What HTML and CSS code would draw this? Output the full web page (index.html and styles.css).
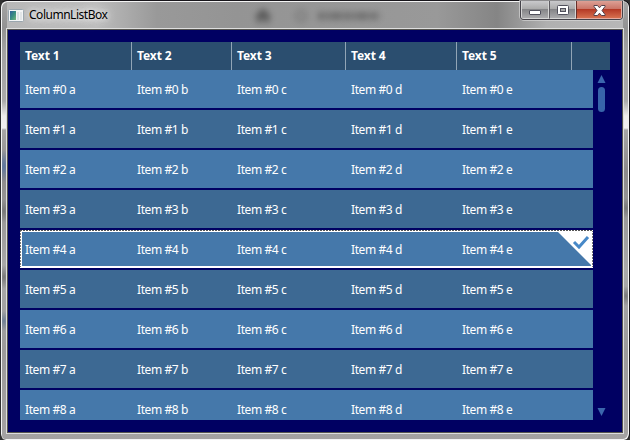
FILE: index.html
```
<!DOCTYPE html>
<html lang="en">
<head>
<meta charset="utf-8">
<title>ColumnListBox</title>
<link rel="stylesheet" href="styles.css">
</head>
<body>
<div class="window">
  <header class="titlebar">
    <svg class="app-icon" width="16" height="14" viewBox="0 0 16 14">
      <defs><linearGradient id="app" x2="1" y2="1"><stop stop-color="#315f9d"/><stop offset=".5" stop-color="#388d83"/><stop offset="1" stop-color="#78b77c"/></linearGradient></defs>
      <rect x=".5" y=".5" width="15" height="12" rx="1" fill="#f3f5f6" stroke="#9aa6ae"/>
      <rect x="2" y="2" width="6" height="9" fill="url(#app)"/>
      <rect x="9" y="3" width="2" height="8" fill="#dce2e6"/>
      <rect x="12" y="3" width="2" height="8" fill="#e1e5e7"/>
    </svg>
    <span class="title">ColumnListBox</span>
    <svg class="glass" width="170" height="26" viewBox="0 0 170 26">
      <path d="M2 15 11 6l9 9h-3v6h-4v-4H9v4H5v-6z" fill="#333"/>
      <circle cx="49" cy="14" r="5" fill="none" stroke="#555" stroke-width="2"/>
      <path d="M66 14h62" stroke="#4c4c4c" stroke-width="7" stroke-dasharray="7 2 5 1 9 2"/>
    </svg>
    <div class="controls">
      <span class="control minimize"><svg width="12" height="5"><rect x=".5" y=".5" width="11" height="4" rx=".5" fill="#fff" stroke="#50505c"/></svg></span>
      <span class="control maximize"><svg width="12" height="10"><rect x=".5" y=".5" width="11" height="9" rx="1" fill="#fff" stroke="#50505c"/><rect x="3.5" y="3.5" width="5" height="3" fill="#aaa" stroke="#50505c"/></svg></span>
      <span class="control close"><svg width="13" height="11" viewBox="0 0 13 11"><path d="M1 .5h3.500l2 2.300 2-2.300H12v1L9 5.500l3 4v1H8.500l-2-2.300-2 2.300H1v-1l3-4-3-4z" fill="#fff" stroke="#53414b"/></svg></span>
    </div>
  </header>
  <main class="client">
    <section class="list">
      <div class="columns head"><span>Text 1</span><span>Text 2</span><span>Text 3</span><span>Text 4</span><span>Text 5</span><span></span></div>
      <div class="body">
        <div class="rows" id="rows"></div>
        <div class="scrollbar">
          <svg width="9" height="8"><path d="M4.500 0 8.500 8H.5z" fill="#3b66ad"/></svg>
          <span class="thumb"></span>
          <svg class="down" width="9" height="8"><path d="M.5 0h8l-4 8z" fill="#3b66ad"/></svg>
        </div>
      </div>
    </section>
  </main>
</div>
<script src="rows.js"></script>
</body>
</html>
```
FILE: styles.css
```
* { box-sizing: border-box; }
body { margin: 0; overflow: hidden; background: #303030; font: 12px "Noto Sans", sans-serif; }
.window {
  position: relative;
  width: 630px; height: 440px;
  padding: 1px 6px 6px;
  border: 1px solid #17151a; border-bottom: 0; border-left-color: #303030;
  border-radius: 7px 7px 6px 6px;
  box-shadow: inset 1px 1px #f4f4f4, inset -1px -1px #f4f4f4;
  background:
    radial-gradient(6px 16px at 3px 165px, #5c76a0, #5c76a000) no-repeat,
    radial-gradient(6px 10px at 3px 320px, #6f7f94, #6f7f9400) no-repeat,
    radial-gradient(6px 12px at 3px 210px, #777, #7770) no-repeat,
    radial-gradient(6px 12px at 3px 276px, #777, #7770) no-repeat,
    radial-gradient(6px 10px at 625px 207px, #777, #7770) no-repeat,
    radial-gradient(6px 10px at 625px 295px, #777, #7770) no-repeat,
    linear-gradient(#a5a5a5 0, #929292 27px, #a2a2a2 50px, #aaa 100px, #eeecec 115px, #f1f0f0 127px, #a6a5a5 129px, #8c8a8a 170px, #a9a9a9 270px, #9b9a9a 350px, #a4a2a2 100%);
}
.titlebar {
  position: relative;
  display: flex; align-items: flex-start;
  height: 26px; padding-left: 1px;
  background: linear-gradient(90deg, #b8b8b8, #bcbcbc 90px, #999 150px, #949494 230px, #999 430px, #858585 490px, #b0b0b0 540px, #b7b7b7);
}
.app-icon { margin-top: 7px; }
.title {
  margin: 3px 0 0 5px;
  line-height: 20px; letter-spacing: -.48px; color: #000;
  text-shadow: 0 0 5px #eee, 0 0 9px #eee, 0 0 12px #ddd;
}
.glass { position: absolute; left: 245px; top: 0; filter: blur(3px); opacity: .6; }
.controls {
  position: absolute; right: 0; top: -1px;
  display: flex;
  width: 103px; height: 19px;
  border: 1px solid #45434a; border-top: 0;
  border-radius: 0 0 4px 4px;
  box-shadow: 0 0 0 1px #ddd9;
  overflow: hidden;
}
.control {
  display: grid; place-items: center;
  height: 18px; padding-top: 1px;
  border: 1px solid #d5d5d5; border-top: 0;
  background: linear-gradient(#c9c9cc, #aaa 47%, #858588 50%, #aaaaac);
}
.minimize { width: 28px; padding-top: 6px; }
.maximize { width: 27px; border-left-color: #5d5b61; }
.close { flex: 1; border-color: #e5aba0; border-left-color: #68302b; background: linear-gradient(#dda095, #ca7466 47%, #b53a26 50%, #d6704f); }
.client {
  width: 616px; height: 404px;
  margin-top: 1px;
  padding: 12px 11px 11px 12px;
  background: #000062;
  border: 1px solid #55544f;
  outline: 1px solid #dedede;
}
.list { display: flex; flex-direction: column; width: 590px; height: 378px; color: #fff; }
.columns { display: grid; grid-template-columns: 112px 100px 114px 111px 115px 1fr; }
.columns span { padding-left: 5px; }
.head { height: 28px; line-height: 28px; background: #2b4e6f; font-weight: 700; letter-spacing: -.08px; }
.head span:not(:last-child) { border-right: 1px solid #92a5b6; }
.body { display: flex; height: 350px; overflow: hidden; }
.rows { width: 573px; }
.row { position: relative; height: 38px; margin-bottom: 2px; line-height: 40px; background: #4578aa; letter-spacing: -.42px; }
.row:nth-child(even) { background: #3d6993; }
.row.selected { box-shadow: inset 0 0 0 2px #fff; }
.row.selected::after {
  content: ""; position: absolute; inset: 0 0 1px;
  background:
    repeating-linear-gradient(90deg, #555 0 2px, #fff 2px 3px) 0 0 / 100% 1px no-repeat,
    repeating-linear-gradient(#777 0 2px, #fff 2px 3px) 0 0 / 1px 100% no-repeat,
    repeating-linear-gradient(#777 0 2px, #fff 2px 3px) 100% 0 / 1px 100% no-repeat;
}
.check { position: absolute; right: 0; top: 1px; }
.scrollbar { display: flex; flex-direction: column; align-items: center; width: 17px; padding: 5px 0 4px; }
.thumb { width: 7px; height: 25px; margin-top: 4px; border-radius: 4px; background: #3864aa; }
.down { margin-top: auto; }
```
FILE: rows.js
```
const columns = ['a', 'b', 'c', 'd', 'e'];
const check = '<svg class="check" width="37" height="37"><path d="M1 0h36v36z" fill="#fff"/><path d="m18 11 5 5 9-10" fill="none" stroke="#4889c8" stroke-width="3"/></svg>';
document.getElementById('rows').innerHTML = Array.from({ length: 9 }, (_, i) =>
  `<div class="columns row${i === 4 ? ' selected' : ''}">${columns.map(c => `<span>Item #${i} ${c}</span>`).join('')}${i === 4 ? check : ''}</div>`
).join('');
```
